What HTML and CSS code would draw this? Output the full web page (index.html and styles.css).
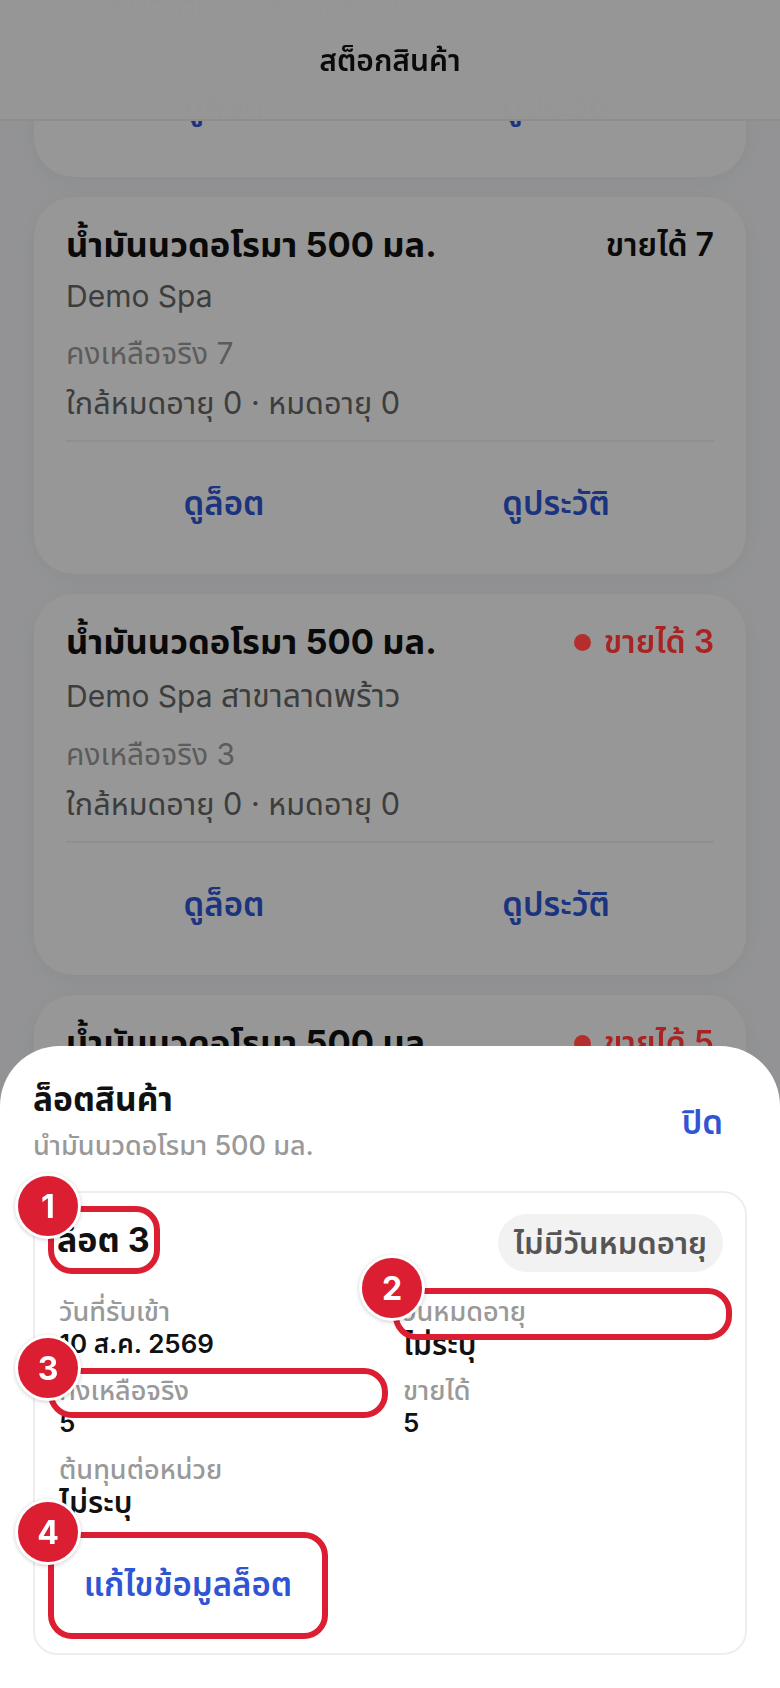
FILE: index.html
```html
<!DOCTYPE html>
<html lang="th">
<head>
<meta charset="utf-8">
<title>สต็อกสินค้า</title>
<link rel="stylesheet" href="styles.css">
</head>
<body>
<main class="list">
  <article class="card">
    <div class="card-top"><h2 class="name">น้ำมันนวดอโรมา 500 มล.</h2><span class="avail">ขายได้ 9</span></div>
    <p class="branch">Demo Spa</p>
    <p class="remain">คงเหลือจริง 9</p>
    <p class="expiry">ใกล้หมดอายุ 0 · หมดอายุ 0</p>
    <div class="actions"><span class="action">ดูล็อต</span><span class="action">ดูประวัติ</span></div>
  </article>
  <article class="card">
    <div class="card-top"><h2 class="name">น้ำมันนวดอโรมา 500 มล.</h2><span class="avail">ขายได้ 7</span></div>
    <p class="branch">Demo Spa</p>
    <p class="remain">คงเหลือจริง 7</p>
    <p class="expiry">ใกล้หมดอายุ 0 · หมดอายุ 0</p>
    <div class="actions"><span class="action">ดูล็อต</span><span class="action">ดูประวัติ</span></div>
  </article>
  <article class="card card-tall">
    <div class="card-top"><h2 class="name">น้ำมันนวดอโรมา 500 มล.</h2><span class="avail avail-low"><i class="dot"></i>ขายได้ 3</span></div>
    <p class="branch">Demo Spa <span class="branch-thai">สาขาลาดพร้าว</span></p>
    <p class="remain">คงเหลือจริง 3</p>
    <p class="expiry">ใกล้หมดอายุ 0 · หมดอายุ 0</p>
    <div class="actions"><span class="action">ดูล็อต</span><span class="action">ดูประวัติ</span></div>
  </article>
  <article class="card">
    <div class="card-top"><h2 class="name">น้ำมันนวดอโรมา 500 มล.</h2><span class="avail avail-low"><i class="dot"></i>ขายได้ 5</span></div>
  </article>
</main>
<header class="topbar"><h1 class="topbar-title">สต็อกสินค้า</h1></header>
<div class="scrim"></div>
<section class="sheet">
  <div class="sheet-head">
    <div>
      <h2 class="sheet-title">ล็อตสินค้า</h2>
      <p class="sheet-sub">นำมันนวดอโรมา 500 มล.</p>
    </div>
    <span class="sheet-close">ปิด</span>
  </div>
  <div class="lot">
    <div class="lot-top"><h3 class="lot-name">ล็อต 3</h3><span class="pill">ไม่มีวันหมดอายุ</span></div>
    <div class="lot-grid">
      <div class="field"><span class="label">วันที่รับเข้า</span><span class="value">10 ส.ค. 2569</span></div>
      <div class="field"><span class="label">วันหมดอายุ</span><span class="value value-thai">ไม่ระบุ</span></div>
      <div class="field"><span class="label">คงเหลือจริง</span><span class="value">5</span></div>
      <div class="field"><span class="label">ขายได้</span><span class="value">5</span></div>
      <div class="field"><span class="label">ต้นทุนต่อหน่วย</span><span class="value value-thai">ไม่ระบุ</span></div>
    </div>
    <div class="lot-edit">แก้ไขข้อมูลล็อต</div>
  </div>
</section>
<div class="ring ring-1"></div>
<div class="ring ring-2"></div>
<div class="ring ring-3"></div>
<div class="ring ring-4"></div>
<span class="badge badge-1">1</span>
<span class="badge badge-2">2</span>
<span class="badge badge-3">3</span>
<span class="badge badge-4">4</span>
</body>
</html>
```
FILE: styles.css
```css
* { box-sizing: border-box; }
html, body { margin: 0; height: 1688px; overflow: hidden; }
body {
  position: relative;
  width: 780px;
  background: #f5f6f8;
  font-family: Inter, "Noto Sans Thai", "Noto Sans", sans-serif;
  color: #111;
}
h1, h2, h3, p { margin: 0; font: inherit; }

.list { display: flex; flex-direction: column; gap: 20px; padding: 0 34px; margin-top: -200px; }
.card {
  background: #fcfcfc;
  border-radius: 40px;
  padding: 28px 32px 0;
  height: 377px;
  box-shadow: 0 4px 24px rgba(0, 0, 0, .05);
}
.card-tall { height: 381px; }
.card-top { display: flex; justify-content: space-between; align-items: center; height: 40px; }
.name { font-size: 34.5px; font-weight: 700; line-height: 40px; }
.avail { font-size: 32px; font-weight: 600; line-height: 40px; display: flex; align-items: center; }
.avail-low { color: #a82424; position: relative; z-index: 2; }
.dot { width: 17px; height: 17px; border-radius: 50%; background: #b52e2e; margin-right: 13px; }
.branch { font-size: 30px; line-height: 40px; color: #666; margin-top: 11px; }
.card-tall .branch { line-height: 43px; margin-top: 12px; margin-bottom: -1px; }
.branch-thai { font-size: 32px; }
.remain { font-size: 30px; line-height: 40px; color: #999; margin-top: 17px; }
.expiry { font-size: 30.6px; line-height: 40px; color: #666; margin-top: 10px; }
.actions { display: grid; grid-template-columns: 1fr 1fr; column-gap: 16px; border-top: 2px solid #eee; margin-top: 17px; padding-top: 41px; }
.action { text-align: center; font-size: 33px; font-weight: 600; line-height: 40px; color: #2f55d4; }

.topbar {
  position: absolute; left: 0; top: 0; width: 780px; height: 121px;
  background: rgba(250, 250, 251, .98);
  backdrop-filter: blur(20px);
  border-bottom: 2px solid rgba(0, 0, 0, .05);
  display: flex; justify-content: center; align-items: center;
}
.topbar-title { font-size: 30px; font-weight: 600; line-height: 40px; }

.scrim { position: absolute; inset: 0; background: rgba(0, 0, 0, .4); z-index: 1; }

.sheet {
  position: absolute; left: 0; right: 0; top: 1046px; bottom: 0; z-index: 3;
  background: #fff;
  border-radius: 60px 60px 0 0;
  padding: 31px 33px 0;
}
.sheet-head { display: flex; justify-content: space-between; align-items: flex-start; height: 114px; }
.sheet-title { font-size: 33.5px; font-weight: 700; line-height: 44px; }
.sheet-sub { font-size: 27px; font-weight: 500; line-height: 36px; color: #999; margin-top: 7px; }
.sheet-close { font-size: 33px; font-weight: 600; line-height: 44px; color: #2f55d4; margin: 23px 24px 0 0; }

.lot { height: 464px; border: 2px solid #eee; border-radius: 24px; padding: 21px 22px 0 24px; }
.lot-top { display: flex; justify-content: space-between; align-items: center; height: 58px; }
.lot-name { font-size: 34px; font-weight: 700; line-height: 44px; margin-top: -6px; margin-left: -2px; }
.pill { background: #f2f2f2; color: #555; border-radius: 29px; height: 58px; padding: 0 16px; font-size: 31px; font-weight: 600; line-height: 58px; }
.lot-grid { display: grid; grid-template-columns: 344px 1fr; row-gap: 17px; margin-top: 24px; }
.field { display: flex; flex-direction: column; height: 62px; }
.label { font-size: 27px; font-weight: 500; line-height: 32px; color: #999; }
.value { font-size: 26px; font-weight: 600; line-height: 32px; color: #111; }
.value-thai { font-size: 30px; }
.lot-edit {
  display: flex; justify-content: center; align-items: center;
  margin: 16px 0 0 -11px; width: 280px; height: 107px;
  font-size: 33px; font-weight: 600; color: #2f55d4;
}

.ring { position: absolute; z-index: 4; border: 6px solid #dc1e32; border-radius: 24px; }
.ring-1 { left: 48px; top: 1206px; width: 112px; height: 68px; }
.ring-2 { left: 393px; top: 1288px; width: 339px; height: 52px; }
.ring-3 { left: 48px; top: 1368px; width: 340px; height: 50px; }
.ring-4 { left: 48px; top: 1532px; width: 280px; height: 107px; }

.badge {
  position: absolute; z-index: 5; width: 66px; height: 66px; border-radius: 50%;
  background: #dc1e32; border: 3px solid #fff; color: #fff;
  box-shadow: 0 1px 4px rgba(0, 0, 0, .2);
  display: flex; justify-content: center; align-items: center;
  font-size: 32px; font-weight: 700;
}
.badge-1 { left: 15px; top: 1173px; }
.badge-2 { left: 359px; top: 1255px; }
.badge-3 { left: 15px; top: 1335px; }
.badge-4 { left: 15px; top: 1499px; }
```
